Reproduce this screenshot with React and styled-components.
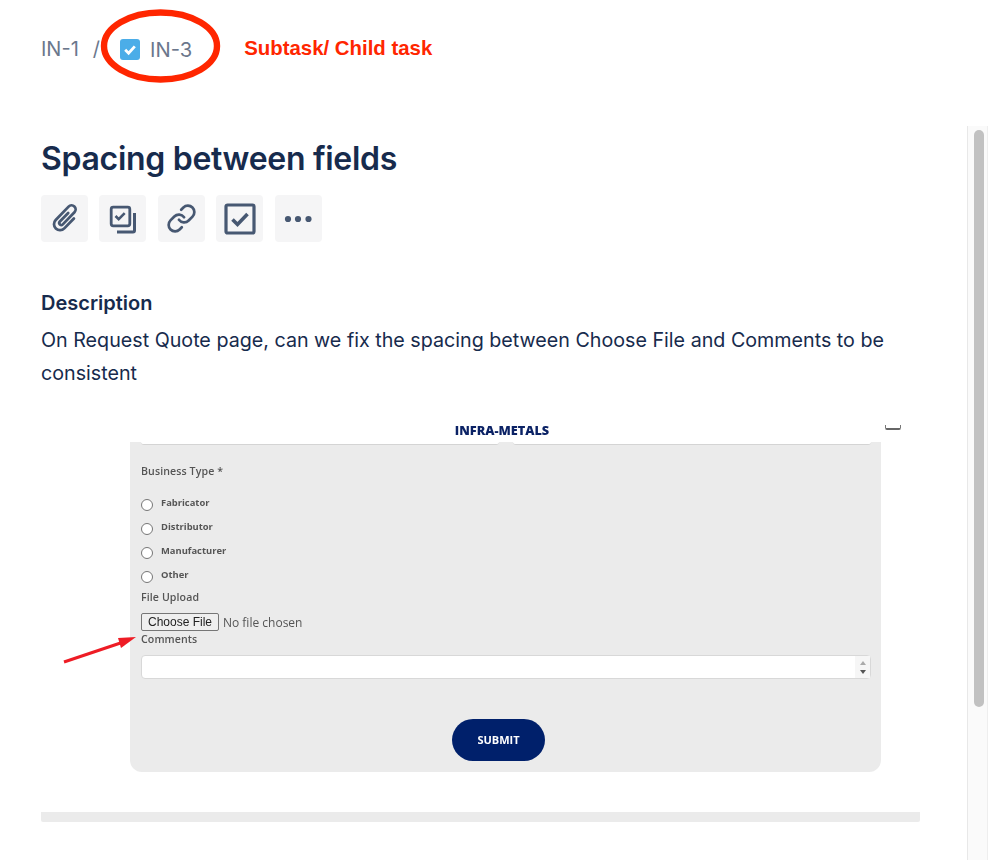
import React from 'react';
import styled, { createGlobalStyle } from 'styled-components';
import { Link } from 'lucide-react';

const GlobalStyle = createGlobalStyle`
  html, body {
    margin: 0;
    padding: 0;
    background: #fff;
  }
  * {
    box-sizing: border-box;
  }
`;

const Page = styled.div`
  position: relative;
  width: 999px;
  height: 860px;
  overflow: hidden;
  font-family: Inter, "Liberation Sans", sans-serif;
  color: #172b4d;
`;

const Breadcrumb = styled.div`
  height: 126px;
  padding: 39px 0 0 41px;
  display: flex;
  align-items: flex-start;
  font-size: 20px;
  line-height: 21px;
  color: #6b778c;
`;

const Crumb = styled.span`
  margin-left: ${(props) => props.$left || 0}px;
  font-size: ${(props) => props.$size || 20}px;
`;

const Annotation = styled.span`
  margin-left: 52px;
  font-family: "Liberation Sans", sans-serif;
  font-weight: 700;
  font-size: 20.4px;
  color: #ff2600;
  line-height: 19px;
`;

const Circle = styled.svg`
  position: absolute;
  left: 95px;
  top: 4px;
`;

const Body = styled.div`
  display: flex;
  height: 734px;
  padding-right: 11px;
`;

const Content = styled.main`
  flex: 1;
  padding: 13px 47px 0 41px;
`;

const Title = styled.h1`
  margin: 0;
  font-size: 32px;
  line-height: 40px;
  font-weight: 600;
  letter-spacing: -0.3px;
`;

const Toolbar = styled.div`
  display: flex;
  gap: 11.4px;
  margin-top: 16px;
`;

const ToolButton = styled.button`
  width: 47px;
  height: 47px;
  padding: 0;
  border: none;
  border-radius: 4px;
  background: #f5f5f6;
  color: #475872;
  display: flex;
  align-items: center;
  justify-content: center;
`;

const SectionTitle = styled.h2`
  margin: 48px 0 0;
  font-size: 20px;
  line-height: 26px;
  font-weight: 600;
`;

const Paragraph = styled.p`
  margin: 8px 0 0;
  font-size: 19.7px;
  line-height: 33px;
  max-width: 860px;
`;

const Shot = styled.div`
  position: relative;
  margin: 30px 0 0 89px;
  width: 751px;
  filter: blur(0.35px);
`;

const ShotHeader = styled.div`
  height: 22px;
  display: flex;
  align-items: center;
  justify-content: center;
  padding: 0 7px 2px 0;
  font-family: "Open Sans", sans-serif;
  font-weight: 800;
  font-size: 12.7px;
  color: #0b2265;
`;

const Bracket = styled.span`
  position: absolute;
  left: 755px;
  top: 5px;
  width: 16px;
  height: 5px;
  border: 1px solid #777;
  border-top: none;
  border-bottom: 2px solid #666;
  border-radius: 0 0 2px 2px;
`;

const Form = styled.form`
  background: #ebebeb;
  border-radius: 0 0 12px 12px;
  padding: 0 10px 11px 11px;
  font-family: "Open Sans", sans-serif;
  color: #555;
`;

const TopFields = styled.div`
  display: flex;
  gap: 14px;
`;

const TopField = styled.div`
  flex: 1;
  height: 3px;
  background: #fff;
  border-bottom: 1px solid #d4d4d4;
  border-radius: 0 0 4px 4px;
`;

const FieldLabel = styled.div`
  margin-top: ${(props) => props.$top}px;
  font-size: 10.6px;
  line-height: 16px;
  font-weight: 600;
  letter-spacing: 0.1px;
`;

const RadioGroup = styled.div`
  margin-top: 11px;
`;

const RadioRow = styled.label`
  height: 24px;
  display: flex;
  align-items: center;
  gap: 8px;
  font-size: 9.4px;
  font-weight: 700;
`;

const Radio = styled.input.attrs({ type: 'radio' })`
  appearance: none;
  width: 12px;
  height: 12px;
  margin: 6px 0 0;
  background: #fff;
  border: 1px solid #767676;
  border-radius: 50%;
`;

const FileRow = styled.div`
  margin-top: 8px;
  display: flex;
  align-items: center;
  gap: 4px;
  height: 18px;
  font-size: 12px;
`;

const ChooseButton = styled.button`
  width: 78px;
  height: 18px;
  padding: 0;
  background: #efefef;
  border: 1px solid #767676;
  border-radius: 2px;
  font-family: "Liberation Sans", sans-serif;
  font-size: 12px;
  color: #222;
`;

const CommentBox = styled.div`
  margin-top: 8px;
  height: 24px;
  background: #fff;
  border: 1px solid #d8d8d8;
  border-radius: 4px;
  display: flex;
  justify-content: flex-end;
`;

const Spinner = styled.div`
  width: 15px;
  background: #f6f6f6;
  display: flex;
  flex-direction: column;
  align-items: center;
  justify-content: center;
  gap: 5px;
`;

const Arrow = styled.span`
  width: 0;
  height: 0;
  border-left: 3px solid transparent;
  border-right: 3px solid transparent;
  ${(props) => (props.$down
    ? 'border-top: 4px solid #555;'
    : 'border-bottom: 4px solid #aaa;')}
`;

const Submit = styled.button`
  display: block;
  width: 93px;
  height: 42px;
  margin: 40px 0 0 311px;
  padding: 0 0 2px;
  border: none;
  border-radius: 21px;
  background: #00206b;
  color: #fff;
  font-family: "Open Sans", sans-serif;
  font-size: 11px;
  font-weight: 700;
`;

const RedArrow = styled.svg`
  position: absolute;
  left: -70px;
  top: 205px;
`;

const Divider = styled.div`
  margin-top: 40px;
  height: 10px;
  background: #ebebeb;
  border-radius: 0 0 2px 2px;
`;

const ScrollTrack = styled.div`
  width: 21px;
  padding: 4px 3px 0 6px;
  background: #fafafa;
  border-left: 1px solid #e8e8e8;
  border-right: 1px solid #eee;
`;

const ScrollThumb = styled.div`
  height: 577px;
  border-radius: 6px;
  background: #c1c1c1;
`;

const PaperclipIcon = () => (
  <svg width="36" height="36" viewBox="0 0 30 30" fill="none" stroke="currentColor" strokeWidth="2.3" strokeLinecap="round">
    <path transform="rotate(44 15 15)" d="M20 9.5V21a5 5 0 0 1-10 0V5.5a3.4 3.4 0 0 1 6.8 0V19.5a1.7 1.7 0 0 1-3.4 0V9.5" />
  </svg>
);

const SubtaskIcon = () => (
  <svg width="47" height="47" viewBox="0 0 47 47" fill="none" stroke="currentColor">
    <rect x="12.2" y="12.2" width="18.6" height="18.6" rx="2" strokeWidth="2.8" />
    <path d="M16.5 21l3.2 3.2 6-6" strokeWidth="2.6" />
    <path d="M35.5 18v17.5a1.5 1.5 0 0 1-1.5 1.5H18" strokeWidth="3" />
  </svg>
);

const CheckIcon = () => (
  <svg width="32" height="32" viewBox="0 0 32 32" fill="none" stroke="currentColor">
    <rect x="2" y="2" width="28" height="28" rx="1.5" strokeWidth="3.2" />
    <path d="M8.5 16.5l5 5 10-10.5" strokeWidth="3.6" />
  </svg>
);

const DotsIcon = () => (
  <svg width="28" height="8" viewBox="0 0 28 8" fill="currentColor">
    <circle cx="4" cy="4" r="3.1" />
    <circle cx="14" cy="4" r="3.1" />
    <circle cx="24.5" cy="4" r="3.1" />
  </svg>
);

const SubtaskBadge = styled.svg`
  margin: 0 0 0 20px;
`;

const businessTypes = ['Fabricator', 'Distributor', 'Manufacturer', 'Other'];

const App = () => {
  return (
    <Page>
      <GlobalStyle />
      <Breadcrumb>
        <Crumb>IN-1</Crumb>
        <Crumb $left={14}>/</Crumb>
        <SubtaskBadge width="20" height="21" viewBox="0 0 20 21">
          <rect width="20" height="21" rx="3" fill="#4bade8" />
          <path d="M5.2 10.8l3.4 3.4 6.2-6.8" fill="none" stroke="#fff" strokeWidth="2.8" />
        </SubtaskBadge>
        <Crumb $left={10} $size={20.2}>IN-3</Crumb>
        <Annotation>Subtask/ Child task</Annotation>
      </Breadcrumb>
      <Circle width="130" height="85" viewBox="0 0 130 85" fill="none">
        <ellipse cx="65.5" cy="42" rx="56.5" ry="33.5" stroke="#ff2600" strokeWidth="6.4" />
      </Circle>

      <Body>
        <Content>
          <Title>Spacing between fields</Title>
          <Toolbar>
            <ToolButton><PaperclipIcon /></ToolButton>
            <ToolButton><SubtaskIcon /></ToolButton>
            <ToolButton><Link size={31} strokeWidth={2.1} /></ToolButton>
            <ToolButton><CheckIcon /></ToolButton>
            <ToolButton><DotsIcon /></ToolButton>
          </Toolbar>

          <SectionTitle>Description</SectionTitle>
          <Paragraph>
            On Request Quote page, can we fix the spacing between Choose File and Comments to be consistent
          </Paragraph>

          <Shot>
            <ShotHeader>INFRA-METALS</ShotHeader>
            <Bracket />
            <Form onSubmit={(e) => e.preventDefault()}>
              <TopFields>
                <TopField />
                <TopField />
              </TopFields>
              <FieldLabel $top={18}>Business Type *</FieldLabel>
              <RadioGroup>
                {businessTypes.map((type) => (
                  <RadioRow key={type}>
                    <Radio name="business-type" />
                    {type}
                  </RadioRow>
                ))}
              </RadioGroup>
              <FieldLabel $top={3}>File Upload</FieldLabel>
              <FileRow>
                <ChooseButton type="button">Choose File</ChooseButton>
                No file chosen
              </FileRow>
              <FieldLabel $top={0}>Comments</FieldLabel>
              <CommentBox>
                <Spinner>
                  <Arrow />
                  <Arrow $down />
                </Spinner>
              </CommentBox>
              <Submit>SUBMIT</Submit>
            </Form>
            <RedArrow width="80" height="40" viewBox="0 0 80 40">
              <path d="M4 37L62 17.5" stroke="#ee1c25" strokeWidth="3" />
              <path d="M76 12L58 13L61 23Z" fill="#ee1c25" />
            </RedArrow>
          </Shot>

          <Divider />
        </Content>
        <ScrollTrack>
          <ScrollThumb />
        </ScrollTrack>
      </Body>
    </Page>
  );
};

export default App;
